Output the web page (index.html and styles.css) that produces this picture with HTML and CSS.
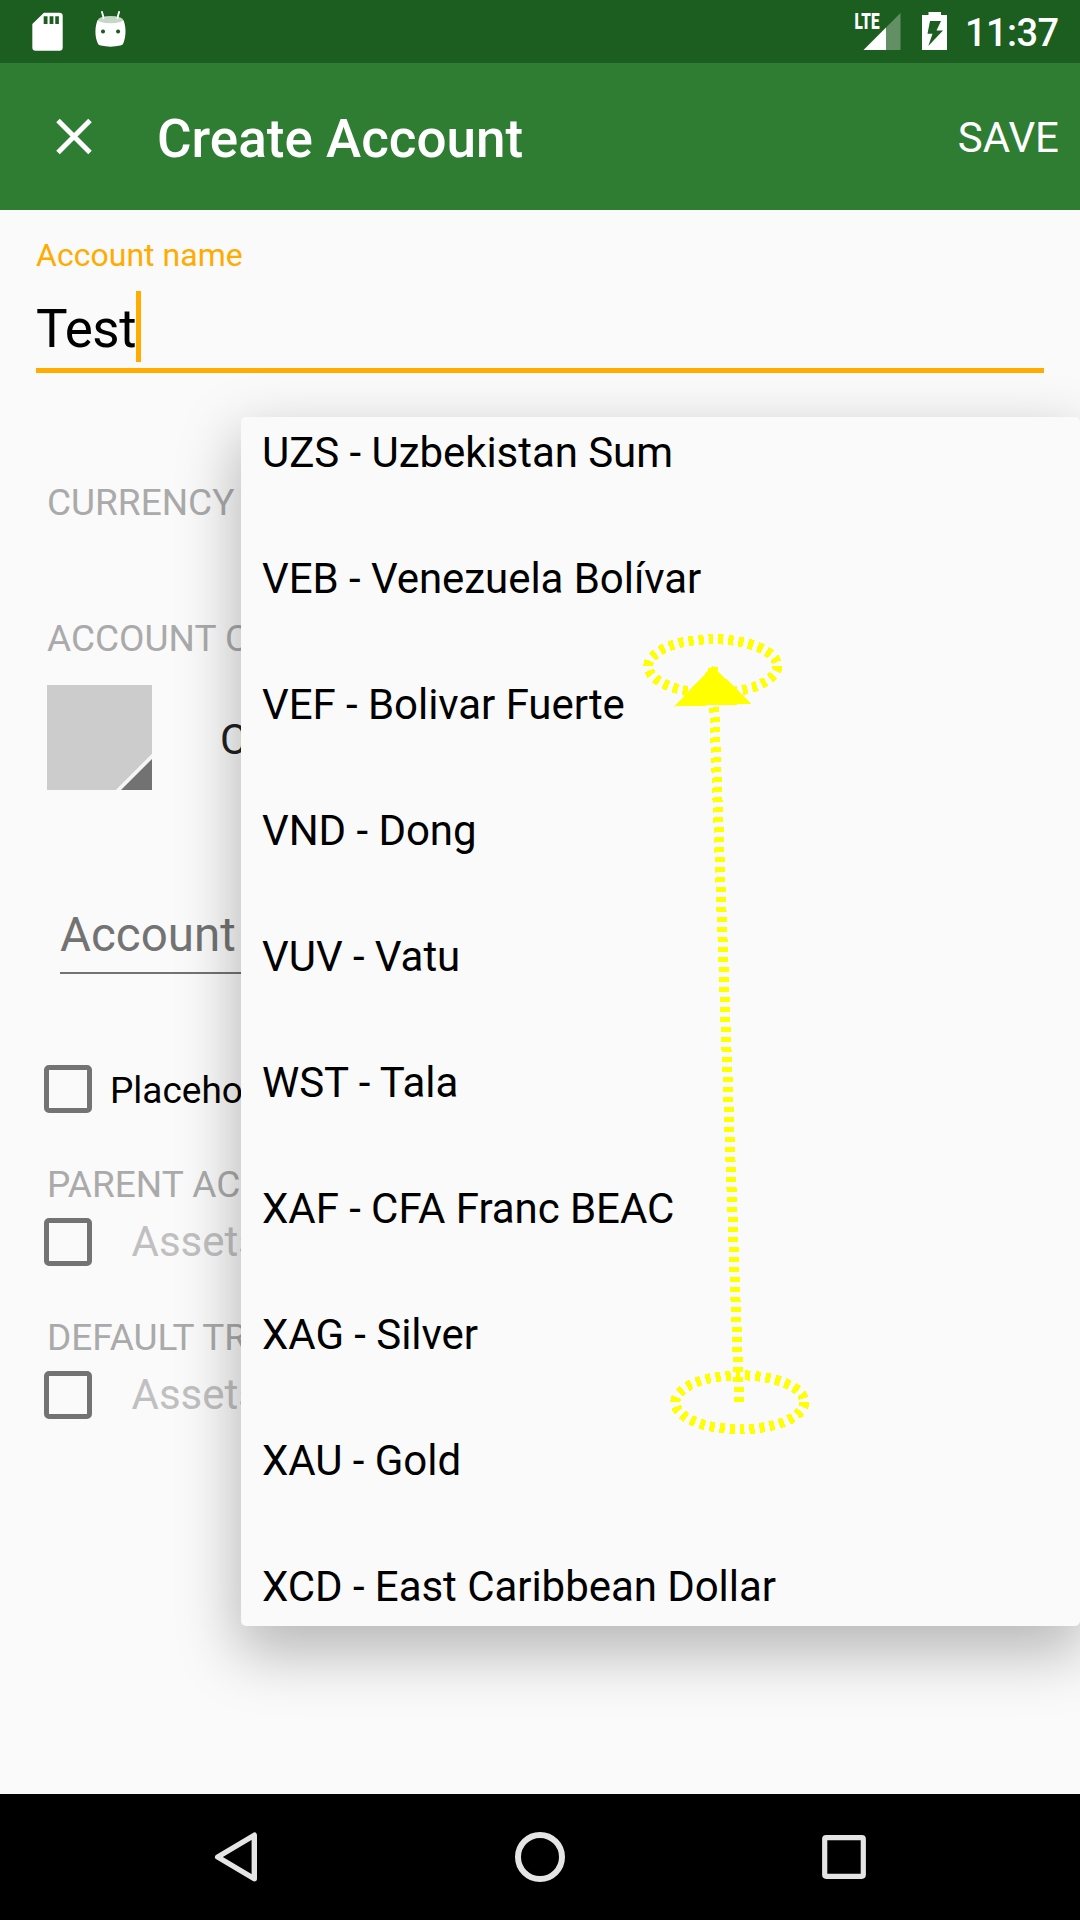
FILE: index.html
```html
<!DOCTYPE html>
<html lang="en">
<head>
<meta charset="utf-8">
<title>Create Account</title>
<link rel="stylesheet" href="styles.css">
</head>
<body>
<div class="screen">
  <header class="status-bar">
    <svg class="status-left" width="140" height="63" viewBox="0 0 140 63">
      <g transform="scale(1.033 1)">
        <path fill="#fff" fill-rule="evenodd" d="M42.500 12.700H57.500a3.200 3.200 0 0 1 3.200 3.200V47.500a3.200 3.200 0 0 1-3.200 3.200H34.500a3.200 3.200 0 0 1-3.200-3.200V24zM42.300 16.300V24h3.700v-7.700zM48 16.300V24h3.700v-7.700zM53.500 16.300V24h3.500v-7.700z"/>
        <path fill="#fff" fill-rule="evenodd" d="M94.500 20Q107 26 119.500 20C122.200 27 122.200 36 119.500 43Q119 45 116.500 45.500Q107 47.800 97.500 45.500Q95 45 94.500 43C91.700 36 91.700 27 94.500 20zM99.700 29.500a2 2 0 1 0 .01 0zM114.300 29.500a2 2 0 1 0 .01 0z"/>
        <ellipse cx="107" cy="19.700" rx="12" ry="3.600" fill="#c5d7c6"/>
        <path d="M98.700 11.800l1.600 6.200M115.300 11.800l-1.600 6.200" stroke="#fff" stroke-width="1.800" stroke-linecap="round"/>
      </g>
    </svg>
    <div class="status-right">
      <svg width="100" height="63" viewBox="850 0 100 63">
        <text class="network" x="854.500" y="29" textLength="25" lengthAdjust="spacingAndGlyphs">LTE</text>
        <path fill="#629064" d="M886 27.500L900.500 13V50H886z"/>
        <path fill="#fff" d="M863.500 50L886 27.500V50z"/>
        <path fill="#fff" fill-rule="evenodd" d="M928.500 12h12.500v3h6v35h-25V15h6.500zM930 21l-2.500 12.700h5L928.300 46 943 30.500h-6.500L941 21z"/>
      </svg>
      <span class="clock">11:37</span>
    </div>
  </header>

  <div class="toolbar">
    <svg class="close" width="36" height="37" viewBox="0 0 36 37"><path d="M2 2.500L34 34.500M34 2.500L2 34.500" stroke="#fff" stroke-width="5"/></svg>
    <h1 class="title">Create Account</h1>
    <span class="save">SAVE</span>
  </div>

  <main class="form">
    <div class="name-label">Account name</div>
    <div class="name-input"><span class="name-value">Test</span><span class="caret"></span></div>
    <div class="section section-currency">CURRENCY</div>
    <div class="section section-color">ACCOUNT C</div>
    <div class="color-row">
      <svg width="105" height="105" viewBox="0 0 105 105">
        <path fill="#ccc" d="M0 0H105V69L69 105H0z"/>
        <path fill="#f5f5f5" d="M105 69V105H69z"/>
        <path fill="#727272" d="M105 74V105H74z"/>
      </svg>
      <span class="color-value">C</span>
    </div>
    <div class="description">Account</div>
    <div class="check-row first"><span class="checkbox"></span><span class="check-text">Placeho</span></div>
    <div class="section section-check">PARENT AC</div>
    <div class="check-row"><span class="checkbox"></span><span class="disabled">Assets</span></div>
    <div class="section section-check">DEFAULT TR</div>
    <div class="check-row"><span class="checkbox"></span><span class="disabled">Assets</span></div>
  </main>

  <nav class="nav-bar">
    <svg width="1080" height="126" viewBox="0 0 1080 126" fill="none" stroke="#e5e5e5">
      <path d="M217.700 63L254.300 41.200V84.800z" stroke-width="5.400" stroke-linejoin="round"/>
      <circle cx="540" cy="63" r="22" stroke-width="6"/>
      <rect x="824.700" y="43.700" width="38.600" height="38.600" rx="1.500" stroke-width="5.200"/>
    </svg>
  </nav>

  <div class="dropdown">
    <ul class="options">
      <li>UZS - Uzbekistan Sum</li>
      <li>VEB - Venezuela Bolívar</li>
      <li>VEF - Bolivar Fuerte</li>
      <li>VND - Dong</li>
      <li>VUV - Vatu</li>
      <li>WST - Tala</li>
      <li>XAF - CFA Franc BEAC</li>
      <li>XAG - Silver</li>
      <li>XAU - Gold</li>
      <li>XCD - East Caribbean Dollar</li>
    </ul>
  </div>

  <svg class="gesture" width="180" height="820" viewBox="640 620 180 820" shape-rendering="crispEdges">
    <g fill="none" stroke="#ff0" stroke-width="10" stroke-dasharray="5 5">
      <ellipse cx="712.800" cy="666.200" rx="64.500" ry="27"/>
      <ellipse cx="739.800" cy="1402.300" rx="64.500" ry="27"/>
      <path d="M739.200 1402L712.700 666"/>
    </g>
    <path fill="#ff0" d="M712.500 666L752 704 674.500 706.500z"/>
  </svg>
</div>
</body>
</html>
```
FILE: styles.css
```css
* { box-sizing: border-box; }

body {
  margin: 0;
  font-family: Roboto, "Liberation Sans", sans-serif;
  color: #000;
}

.screen {
  position: relative;
  display: flex;
  flex-direction: column;
  width: 1080px;
  height: 1920px;
  overflow: hidden;
  background: #fafafa;
}

svg { display: block; flex: none; }

.status-bar {
  display: flex;
  justify-content: space-between;
  height: 63px;
  padding-right: 18px;
  background: #1b5e20;
  color: #fff;
}

.status-right { display: flex; gap: 15px; }

.network { font-size: 22px; font-weight: 900; fill: #fff; }

.clock {
  width: 97px;
  font-size: 38px;
  font-weight: 500;
  line-height: 67px;
  letter-spacing: -.6px;
  white-space: nowrap;
}

.toolbar {
  display: flex;
  align-items: center;
  height: 147px;
  padding: 0 21px 0 55.5px;
  background: #2e7d32;
  color: #fff;
}

.title {
  flex: 1;
  margin: 0 0 0 65.5px;
  padding-top: 4px;
  font-size: 53px;
  font-weight: 500;
}

.save { padding-top: 1px; font-size: 42px; }

.form { flex: 1; padding: 27px 36px 0; }

.name-label { height: 36px; line-height: 36px; font-size: 32px; letter-spacing: .03px; color: #ffab00; }

.name-input {
  display: flex;
  height: 82px;
  margin-top: 18px;
  border-bottom: 5px solid #ffab00;
}

.name-value { width: 100px; line-height: 77px; font-size: 53px; letter-spacing: -.4px; }

.caret { width: 5px; height: 71px; background: #ffab00; }

.section { height: 44px; padding-left: 11px; line-height: 46px; font-size: 37px; color: #aaa; }
.section-currency { margin-top: 107px; }
.section-color { margin-top: 92px; }
.section-check { margin-top: 49px; }

.color-row { display: flex; gap: 68px; height: 105px; margin: 25px 0 0 11px; }

.color-value { padding-top: 2px; line-height: 105px; font-size: 42px; color: #212121; }

.description {
  height: 77px;
  margin: 107px 0 0 24px;
  border-bottom: 2px solid #737373;
  line-height: 76px;
  font-size: 47.5px;
  color: #737373;
}

.check-row { display: flex; align-items: center; height: 48px; margin: 12px 0 0 8px; }
.check-row.first { margin-top: 91px; }

.checkbox {
  width: 48px;
  height: 48px;
  border: 5px solid #737373;
  border-radius: 5px;
}

.check-text { margin-left: 18px; padding-top: 2px; font-size: 37px; }

.disabled { margin-left: 39.5px; padding-bottom: 2px; font-size: 42px; color: #c0c0c0; }

.nav-bar { height: 126px; background: #000; }

.dropdown {
  position: absolute;
  left: 241px;
  top: 417px;
  width: 839px;
  height: 1209px;
  overflow: hidden;
  border-radius: 5px;
  background: #fafafa;
  box-shadow: 0 23px 60px 4px rgba(0, 0, 0, .27);
}

.options { margin: -27px 0 0; padding: 0 0 0 21px; list-style: none; }

.options li { height: 126px; line-height: 126px; font-size: 42px; letter-spacing: -.05px; }

.gesture { position: absolute; left: 640px; top: 620px; }
```
